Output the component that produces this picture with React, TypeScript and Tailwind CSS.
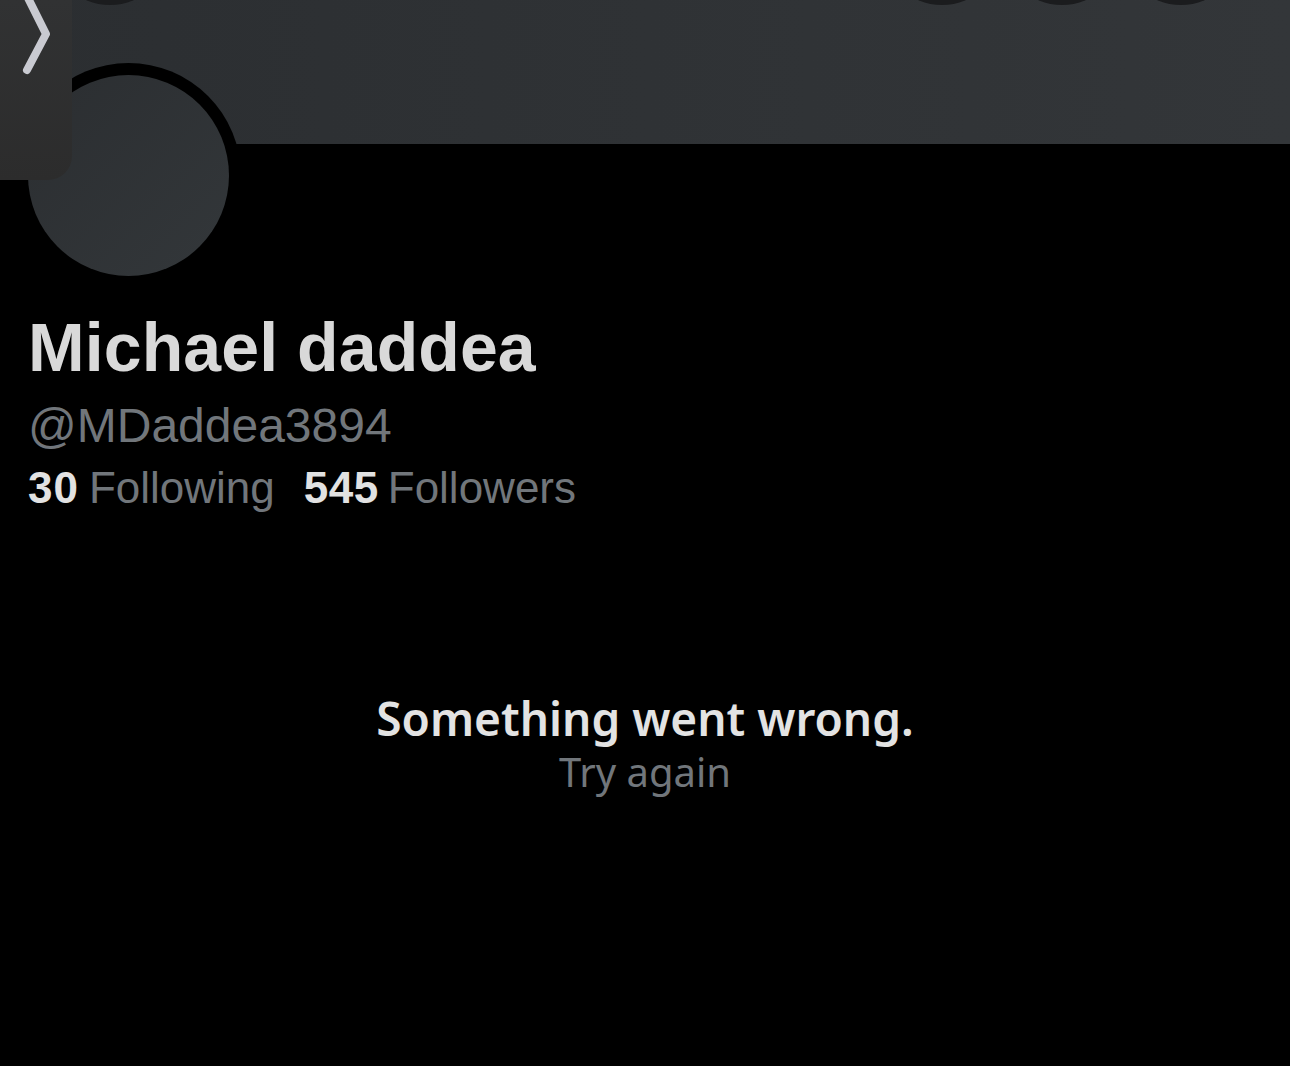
import React from "react";

function HeaderButtons() {
  return (
    <>
      <div className="absolute left-[50px] top-[-115px] h-[120px] w-[120px] rounded-full bg-[#1b1c1e]" />
      <div className="absolute left-[882px] top-[-115px] h-[120px] w-[120px] rounded-full bg-[#1b1c1e]" />
      <div className="absolute left-[1002px] top-[-115px] h-[120px] w-[120px] rounded-full bg-[#1b1c1e]" />
      <div className="absolute left-[1121px] top-[-115px] h-[120px] w-[120px] rounded-full bg-[#1b1c1e]" />
    </>
  );
}

function SidePanel() {
  return (
    <div className="absolute left-0 top-0 z-10 h-[180px] w-[72px] rounded-br-[24px] bg-gradient-to-b from-[#313233] to-[#2c2c2c]">
      <svg width="72" height="90" viewBox="0 0 72 90" className="absolute left-0 top-0">
        <path
          d="M26 -6 L46 34 L27 70"
          fill="none"
          stroke="#c9cad1"
          strokeWidth="8"
          strokeLinecap="round"
          strokeLinejoin="round"
        />
      </svg>
    </div>
  );
}

export default function App() {
  return (
    <div className="relative min-h-[1066px] w-full overflow-hidden bg-black">
      <div className="h-[144px] bg-gradient-to-r from-[#2b2e31] to-[#333639]" />
      <HeaderButtons />
      <SidePanel />

      <div className="ml-4 -mt-[81px] h-[225px] w-[225px] rounded-full bg-black p-3">
        <div className="h-full w-full rounded-full bg-gradient-to-br from-[#2b2e31] to-[#33373a]" />
      </div>

      <div className="px-7 pt-[18px] font-['Liberation_Sans',Arial,sans-serif]">
        <h1 className="text-[68px] font-bold leading-[82px] tracking-[0.1px] text-[#d9d9d9]">
          Michael daddea
        </h1>
        <div className="mt-[9px] text-[48px] leading-[58px] text-[#71767b]">@MDaddea3894</div>
        <div className="mt-[7px] flex items-baseline text-[44px] leading-[52px]">
          <span className="font-bold tracking-[1px] text-[#e2e2e2]">30</span>
          <span className="ml-[10px] text-[#71767b]">Following</span>
          <span className="ml-[29px] font-bold tracking-[0.5px] text-[#e2e2e2]">545</span>
          <span className="ml-[9px] text-[#71767b]">Followers</span>
        </div>
      </div>

      <div className="mt-[176px] flex flex-col items-center font-['Noto_Sans','Open_Sans',sans-serif]">
        <div className="text-[46px] font-semibold leading-[56px] text-[#e3e3e3]">
          Something went wrong.
        </div>
        <div className="text-[40px] leading-[52px] text-[#71767b]">Try again</div>
      </div>
    </div>
  );
}
